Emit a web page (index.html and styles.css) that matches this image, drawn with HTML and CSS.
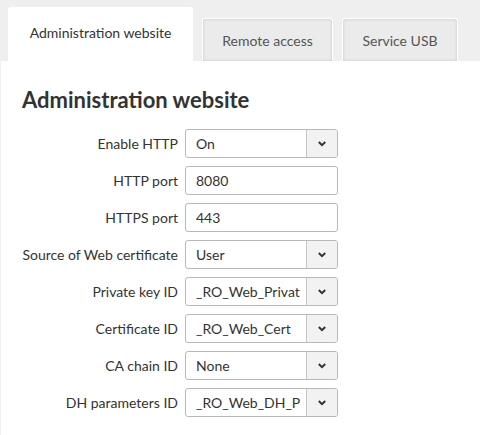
FILE: index.html
```html
<!DOCTYPE html>
<html>
<head>
<meta charset="utf-8">
<link rel="stylesheet" href="styles.css">
</head>
<body>
<div class="tabs">
  <div class="tab tab-active">Administration website</div>
  <div class="tab tab-remote">Remote access</div>
  <div class="tab tab-usb">Service USB</div>
</div>
<div class="panel">
  <h1 class="title">Administration website</h1>
  <div class="form">
    <label class="lbl">Enable HTTP</label>
    <div class="field select"><span class="val">On</span><span class="arrow"><svg width="10" height="8" viewBox="0 0 10 8"><path d="M1.8 2 L5 5.2 L8.2 2" fill="none" stroke="#333" stroke-width="2"/></svg></span></div>
    <label class="lbl">HTTP port</label>
    <div class="field"><span class="val">8080</span></div>
    <label class="lbl">HTTPS port</label>
    <div class="field"><span class="val">443</span></div>
    <label class="lbl">Source of Web certificate</label>
    <div class="field select"><span class="val">User</span><span class="arrow"><svg width="10" height="8" viewBox="0 0 10 8"><path d="M1.8 2 L5 5.2 L8.2 2" fill="none" stroke="#333" stroke-width="2"/></svg></span></div>
    <label class="lbl">Private key ID</label>
    <div class="field select"><span class="val">_RO_Web_Privat</span><span class="arrow"><svg width="10" height="8" viewBox="0 0 10 8"><path d="M1.8 2 L5 5.2 L8.2 2" fill="none" stroke="#333" stroke-width="2"/></svg></span></div>
    <label class="lbl">Certificate ID</label>
    <div class="field select"><span class="val">_RO_Web_Cert</span><span class="arrow"><svg width="10" height="8" viewBox="0 0 10 8"><path d="M1.8 2 L5 5.2 L8.2 2" fill="none" stroke="#333" stroke-width="2"/></svg></span></div>
    <label class="lbl">CA chain ID</label>
    <div class="field select"><span class="val">None</span><span class="arrow"><svg width="10" height="8" viewBox="0 0 10 8"><path d="M1.8 2 L5 5.2 L8.2 2" fill="none" stroke="#333" stroke-width="2"/></svg></span></div>
    <label class="lbl">DH parameters ID</label>
    <div class="field select"><span class="val">_RO_Web_DH_P</span><span class="arrow"><svg width="10" height="8" viewBox="0 0 10 8"><path d="M1.8 2 L5 5.2 L8.2 2" fill="none" stroke="#333" stroke-width="2"/></svg></span></div>
  </div>
</div>
</body>
</html>
```
FILE: styles.css
```css
html, body {
  margin: 0;
  padding: 0;
  background: #efefef;
  font-family: Lato, "Noto Sans", sans-serif;
  color: #333;
  height: 435px;
  overflow: hidden;
}
.tabs {
  display: flex;
  align-items: flex-end;
  gap: 9px;
  padding: 7px 0 0 8px;
  height: 54px;
}
.tab {
  box-sizing: border-box;
  display: flex;
  align-items: center;
  justify-content: center;
  font-size: 14px;
}
.tab-active {
  width: 185px;
  height: 54px;
  background: #fff;
  border-radius: 3px 3px 0 0;
  padding-bottom: 3px;
}
.tab-remote, .tab-usb {
  height: 43px;
  background: #ebebeb;
  border: 1px solid #fff;
  border-bottom: none;
  border-radius: 3px 3px 0 0;
  box-shadow: inset 0 0 3px rgba(0,0,0,0.18);
  color: #555;
}
.tab-remote { width: 131px; }
.tab-usb { width: 116px; }
.panel {
  background: #fff;
  margin-left: 1px;
  height: 374px;
  padding: 0 21px;
}
.title {
  margin: 0;
  padding-top: 24px;
  font-size: 22px;
  font-weight: 700;
  line-height: 30px;
  color: #333;
}
.form {
  display: grid;
  grid-template-columns: 156px 153px;
  column-gap: 7px;
  row-gap: 8px;
  margin-top: 14px;
}
.lbl {
  font-size: 14px;
  text-align: right;
  line-height: 29px;
  color: #333;
  white-space: nowrap;
}
.field {
  box-sizing: border-box;
  height: 29px;
  border: 1px solid #b8b8b8;
  border-radius: 3px;
  display: flex;
  align-items: center;
  font-size: 14px;
  color: #333;
  overflow: hidden;
}
.val {
  flex: 1;
  padding-left: 10px;
  white-space: nowrap;
  overflow: hidden;
}
.select .val { padding-right: 4px; }
.arrow {
  flex: none;
  width: 30px;
  height: 100%;
  background: #f2f2f2;
  border-left: 1px solid #c4c4c4;
  display: flex;
  align-items: center;
  justify-content: center;
}
```
